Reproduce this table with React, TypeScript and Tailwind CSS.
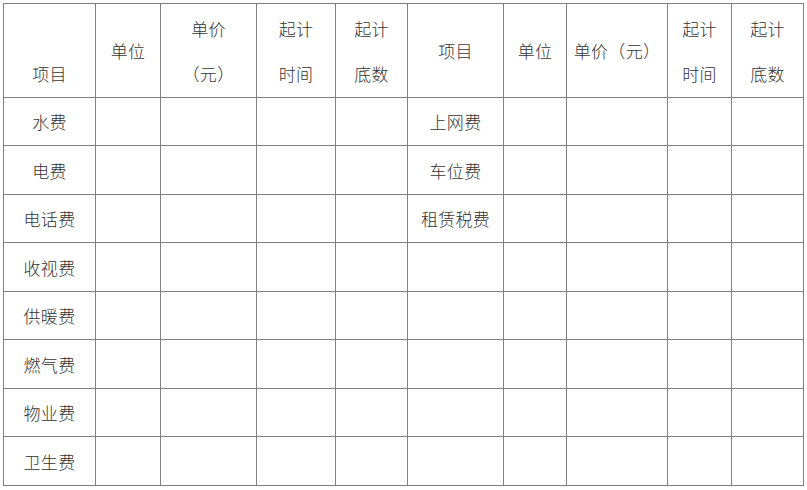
const leftItems = ['水费', '电费', '电话费', '收视费', '供暖费', '燃气费', '物业费', '卫生费'];
const rightItems = ['上网费', '车位费', '租赁税费', '', '', '', '', ''];

function Cell({ children, className = '' }: { children?: React.ReactNode; className?: string }) {
  return (
    <div className={`bg-white flex flex-col items-center justify-center text-center leading-[45px] ${className}`}>
      {children}
    </div>
  );
}

export default function App() {
  return (
    <div
      className="w-[807px] h-[490px] bg-white pt-[3px] pl-[3px] text-[17px] font-light tracking-[0.3px] text-[#333333]"
      style={{ fontFamily: '"Noto Sans CJK SC", "Liberation Sans", sans-serif' }}
    >
      <div className="inline-grid grid-cols-[91px_64px_95px_78px_71px_95px_62px_100px_63px_71px] grid-rows-[93px_47px_48px_47px_48px_47px_48px_47px_48px] gap-px p-px bg-[#808080]">
        {/* Header */}
        <Cell>
          <span>&nbsp;</span>
          <span>项目</span>
        </Cell>
        <Cell>单位</Cell>
        <Cell>
          <span>单价</span>
          <span>（元）</span>
        </Cell>
        <Cell>
          <span>起计</span>
          <span>时间</span>
        </Cell>
        <Cell>
          <span>起计</span>
          <span>底数</span>
        </Cell>
        <Cell>项目</Cell>
        <Cell>单位</Cell>
        <Cell className="whitespace-nowrap">单价（元）</Cell>
        <Cell>
          <span>起计</span>
          <span>时间</span>
        </Cell>
        <Cell>
          <span>起计</span>
          <span>底数</span>
        </Cell>

        {/* Rows */}
        {leftItems.map((item, i) => (
          <>
            <Cell key={`l-${i}`}>{item}</Cell>
            <Cell />
            <Cell />
            <Cell />
            <Cell />
            <Cell>{rightItems[i]}</Cell>
            <Cell />
            <Cell />
            <Cell />
            <Cell />
          </>
        ))}
      </div>
    </div>
  );
}
